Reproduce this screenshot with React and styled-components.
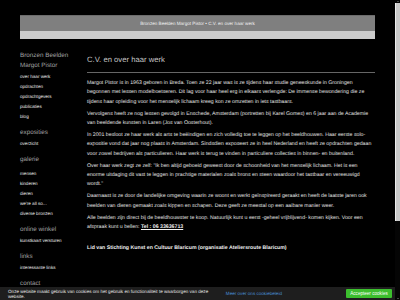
import React from 'react'
import styled, { createGlobalStyle } from 'styled-components'

const GlobalStyle = createGlobalStyle`
  html, body {
    margin: 0;
    background: #000;
  }
  body {
    font-family: "Liberation Sans", Arial, sans-serif;
    color: #cfcfcf;
    text-rendering: geometricPrecision;
  }
`

const Page = styled.div`
  width: 355px;
  margin-left: 20px;
  padding: 15px 0 110px;
`

const HeaderBar = styled.div`
  height: 16px;
  background: #7f7f7f;
  border-top: 1px solid #6c6c6c;
  box-sizing: border-box;
  display: flex;
  align-items: center;
  justify-content: center;
  font-size: 4.6px;
  color: #f2f2f2;
`

const SubBar = styled.div`
  height: 8px;
  background: #cccccc;
`

const Columns = styled.div`
  display: grid;
  grid-template-columns: 67px 288px;
  padding-top: 12px;
`

const Sidebar = styled.nav`
  display: flex;
  flex-direction: column;
`

const Section = styled.div`
  margin-top: ${p => p.$first ? 0 : 6}px;
`

const SideHeading = styled.div`
  font-size: 6.3px;
  line-height: 10px;
  color: #a0a0a0;
  margin-bottom: ${p => p.$gap || 1}px;
`

const SideLink = styled.a`
  display: block;
  font-size: 4.6px;
  line-height: 10px;
  color: #ececec;
  text-decoration: none;
`

const Main = styled.main`
  display: flex;
  flex-direction: column;
`

const Title = styled.h1`
  margin: 0;
  font-weight: normal;
  font-size: 7.7px;
  line-height: 14px;
  color: #c4c4c4;
  padding-top: 2px;
  padding-bottom: 5px;
  border-bottom: 1px solid #666;
`

const Body = styled.div`
  padding-top: 6px;
`

const Para = styled.p`
  margin: 0 0 2.8px;
  margin-top: ${p => p.$spaced ? 12 : 0}px;
  font-size: 5.22px;
  line-height: 9.3px;
  color: #e0e0e0;
`

const Strong = styled.strong`
  color: #f0f0f0;
`

const Phone = styled.a`
  font-weight: bold;
  color: #f4f4f4;
  text-decoration: underline;
`

const CookieBar = styled.div`
  position: fixed;
  left: 0;
  right: 5px;
  bottom: 0;
  height: 13px;
  background: #1e1e1e;
  display: flex;
  align-items: center;
  padding-left: 8px;
  padding-right: 3px;
  font-size: 4.6px;
  color: #e6e6e6;
`

const CookieText = styled.span`
  flex: 1;
`

const CookieLink = styled.a`
  color: #4a8fd6;
  text-decoration: none;
  margin-right: 64px;
`

const AcceptButton = styled.button`
  border: none;
  background: #3cbf2e;
  color: #fff;
  font-family: inherit;
  font-size: 4.6px;
  height: 9px;
  width: 46px;
  padding: 0;
  border-radius: 1px;
`

const ScrollTrack = styled.div`
  position: fixed;
  top: 0;
  right: 0;
  bottom: 0;
  width: 5px;
  background: #050505;
  display: flex;
  flex-direction: column;
  align-items: center;
`

const ScrollArrow = styled.div`
  width: 0;
  height: 0;
  margin: 1px 0;
  border-left: 1.5px solid transparent;
  border-right: 1.5px solid transparent;
  ${p => p.$down ? 'border-top: 1.5px solid #888;' : 'border-bottom: 1.5px solid #888;'}
`

const ScrollThumb = styled.div`
  width: 100%;
  height: 218px;
  background: #c9c9c9;
  border-left: 1px solid #ececec;
  box-sizing: border-box;
  margin-bottom: auto;
`

const menu = [
  { heading: 'Bronzen Beelden Margot Pistor', links: ['over haar werk', 'opdrachten', 'opdrachtgevers', 'publicaties', 'blog'] },
  { heading: 'exposities', links: ['overzicht'] },
  { heading: 'galerie', gap: 4, links: ['mensen', 'kinderen', 'dieren', "we're all so...", 'diverse bronzen'] },
  { heading: 'online winkel', links: ['kunstkaart versturen'] },
  { heading: 'links', links: ['interessante links'] },
  { heading: 'contact', links: ['contactgegevens', 'route'] },
]

export default function App() {
  return (
    <>
      <GlobalStyle />
      <Page>
        <HeaderBar>Bronzen Beelden Margot Pistor • C.V. en over haar werk</HeaderBar>
        <SubBar />
        <Columns>
          <Sidebar>
            {menu.map((s, i) => (
              <Section key={s.heading} $first={i === 0}>
                <SideHeading $gap={s.gap}>
                  {i === 0 ? <>Bronzen Beelden<br />Margot Pistor</> : s.heading}
                </SideHeading>
                {s.links.map(l => <SideLink key={l} href="#">{l}</SideLink>)}
              </Section>
            ))}
          </Sidebar>
          <Main>
            <Title>C.V. en over haar werk</Title>
            <Body>
              <Para>Margot Pistor is in 1963 geboren in Breda. Toen ze 22 jaar was is ze tijdens haar studie geneeskunde in Groningen begonnen met lessen modelboetseren. Dit lag voor haar heel erg in elkaars verlengde: De immense bewondering die ze tijdens haar opleiding voor het menselijk lichaam kreeg kon ze omzetten in iets tastbaars.</Para>
              <Para>Vervolgens heeft ze nog lessen gevolgd in Enschede, Amsterdam (portretten bij Karel Gomes) en 6 jaar aan de Academie van beeldende kunsten in Laren (Jos van Oosterhout).</Para>
              <Para>In 2001 besloot ze haar werk als arts te beëindigen en zich volledig toe te leggen op het beeldhouwen. Haar eerste solo-expositie vond dat jaar nog plaats in Amsterdam. Sindsdien exposeert ze in heel Nederland en heeft ze opdrachten gedaan voor zowel bedrijven als particulieren. Haar werk is terug te vinden in particuliere collecties in binnen- en buitenland.</Para>
              <Para>Over haar werk zegt ze zelf: "Ik ben altijd geboeid geweest door de schoonheid van het menselijk lichaam. Het is een enorme uitdaging dit vast te leggen in prachtige materialen zoals brons en steen waardoor het tastbaar en vereeuwigd wordt."</Para>
              <Para>Daarnaast is ze door de landelijke omgeving waarin ze woont en werkt geïnspireerd geraakt en heeft de laatste jaren ook beelden van dieren gemaakt zoals kippen en schapen. Deze geeft ze meestal op een aaibare manier weer.</Para>
              <Para>Alle beelden zijn direct bij de beeldhouwster te koop. Natuurlijk kunt u eerst -geheel vrijblijvend- komen kijken. Voor een afspraak kunt u bellen: <Phone href="#">Tel : 06 33636713</Phone></Para>
              <Para $spaced><Strong>Lid van Stichting Kunst en Cultuur Blaricum (organisatie Ateliersroute Blaricum)</Strong></Para>
            </Body>
          </Main>
        </Columns>
      </Page>
      <CookieBar>
        <CookieText>Onze website maakt gebruik van cookies om het gebruik en functionaliteit te waarborgen van deze website.</CookieText>
        <CookieLink href="#">Meer over ons cookiebeleid</CookieLink>
        <AcceptButton>Accepteer cookies</AcceptButton>
      </CookieBar>
      <ScrollTrack>
        <ScrollArrow />
        <ScrollThumb />
        <ScrollArrow $down />
      </ScrollTrack>
    </>
  )
}
